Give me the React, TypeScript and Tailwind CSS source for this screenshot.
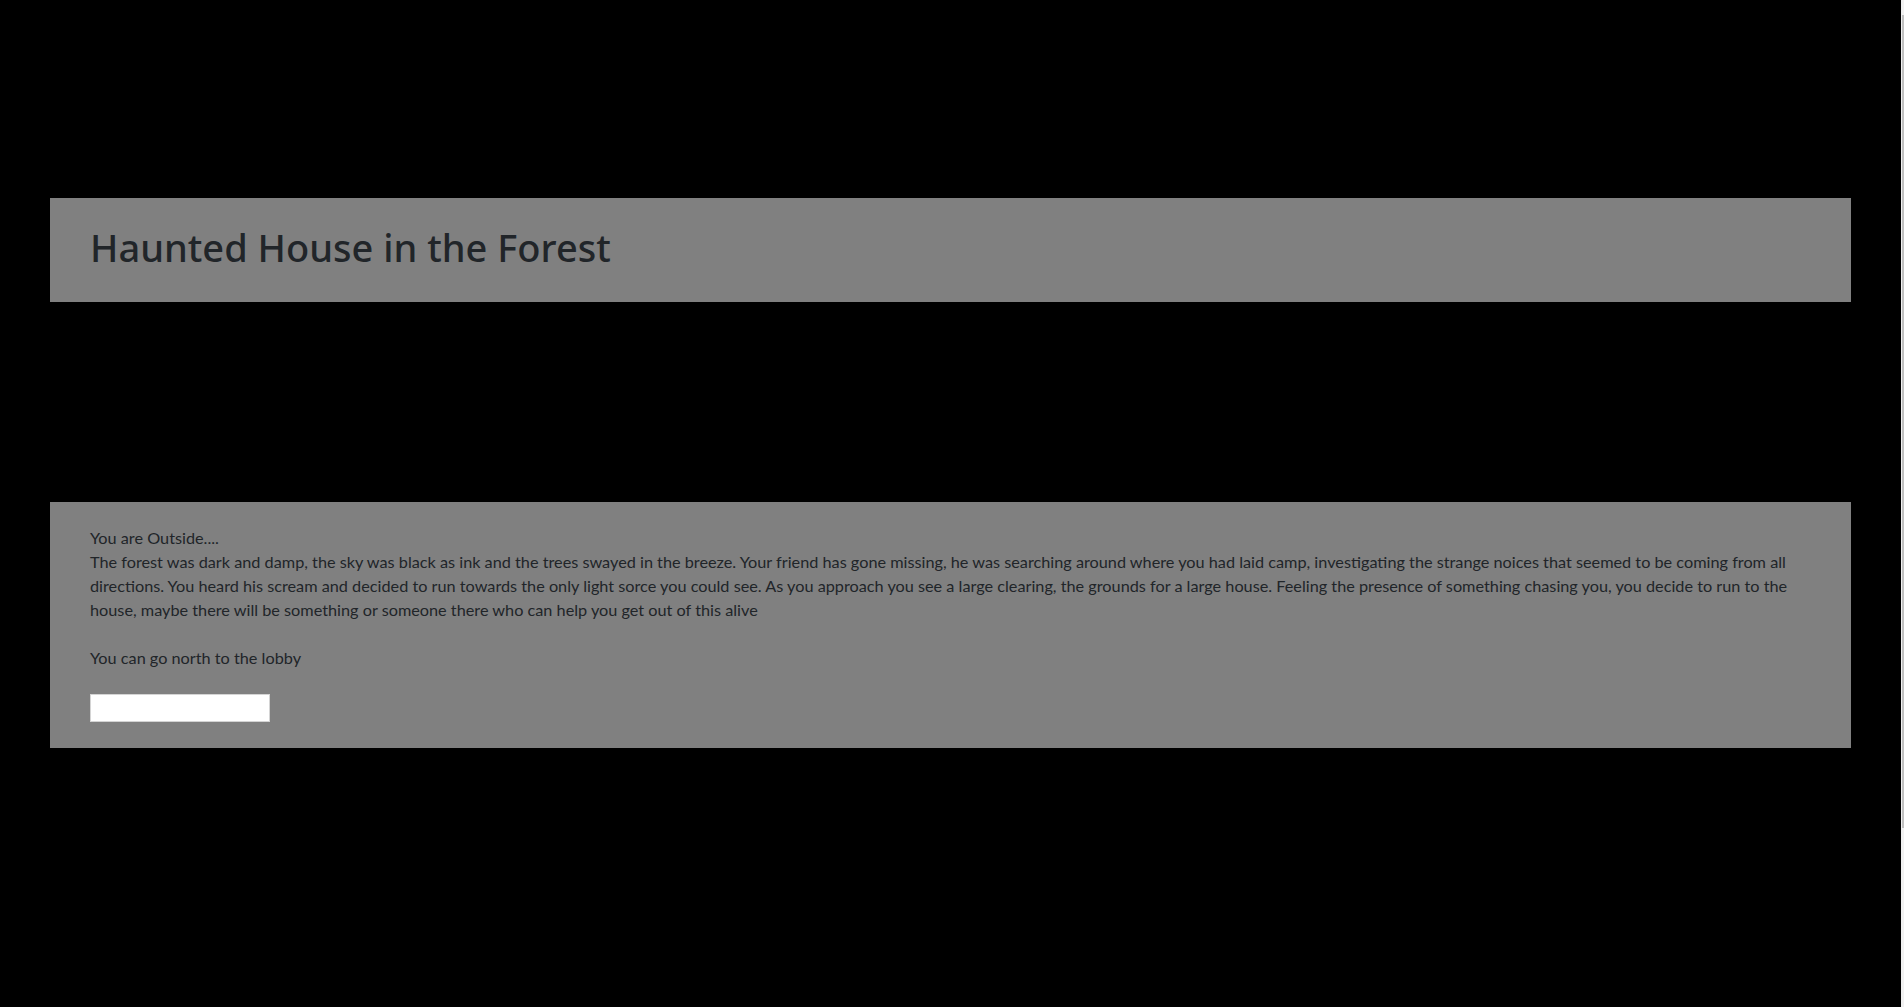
const story = [
  "The forest was dark and damp, the sky was black as ink and the trees swayed in the breeze. Your friend has gone missing, he was searching around where you had laid camp, investigating the strange noices that seemed to be coming from all",
  "directions. You heard his scream and decided to run towards the only light sorce you could see. As you approach you see a large clearing, the grounds for a large house. Feeling the presence of something chasing you, you decide to run to the",
  "house, maybe there will be something or someone there who can help you get out of this alive",
];

const App = () => {
  return (
    <div className="flex min-h-screen w-full bg-black">
      <div className="w-[1901px] pt-[198px]">
        <div className="ml-[50px] w-[1801px] bg-[#808080] px-10 pt-[25px] pb-[31px]">
          <h1
            className="text-[38px] font-medium leading-[48px] text-[#212529]"
            style={{ fontFamily: "'Noto Sans', sans-serif" }}
          >
            Haunted House in the Forest
          </h1>
        </div>

        <div
          className="ml-[50px] mt-[200px] w-[1801px] bg-[#808080] px-10 pt-6 pb-[26px] text-[16.25px] leading-6 text-[#212529]"
          style={{ fontFamily: "Lato, sans-serif" }}
        >
          <p>You are Outside....</p>
          {story.map((line, i) => (
            <p key={i} className="whitespace-nowrap">
              {line}
            </p>
          ))}
          <p className="mt-6">You can go north to the lobby</p>
          <input
            type="text"
            className="mt-6 block h-[28px] w-[180px] border border-[#d4d4d4] bg-white outline-none"
          />
        </div>
      </div>
      <div className="w-[3px] bg-[#f1f1f1]">
        <div className="ml-[1px] mt-[15px] h-[813px] w-[2px] bg-[#c1c1c1]" />
      </div>
    </div>
  );
};

export default App;
